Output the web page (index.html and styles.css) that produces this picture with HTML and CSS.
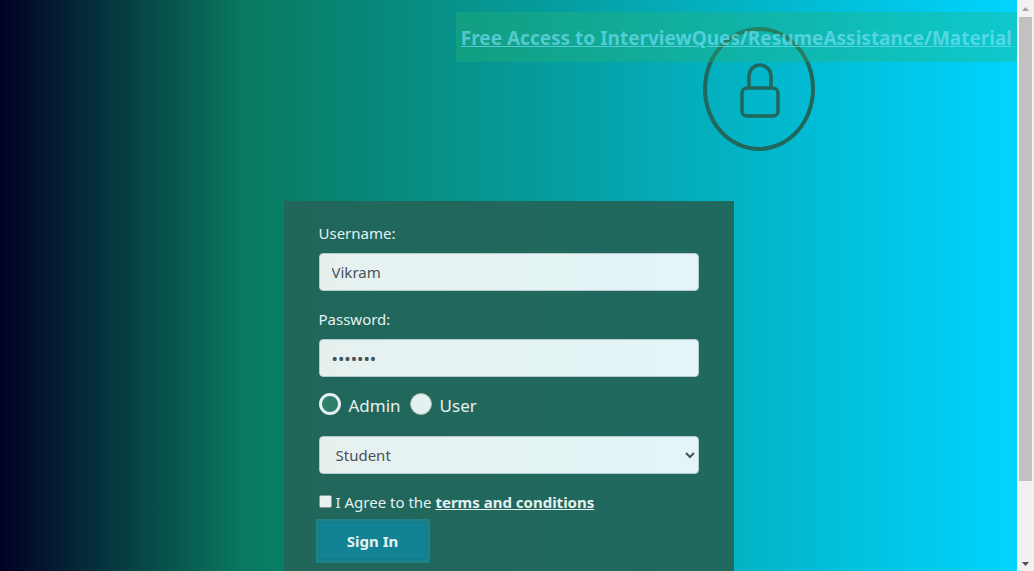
FILE: index.html
```html
<!DOCTYPE html>
<html lang="en">
<head>
<meta charset="utf-8">
<title>Sign In</title>
<link rel="stylesheet" href="styles.css">
</head>
<body>
<main class="page">
  <a class="banner" href="#">Free Access to InterviewQues/ResumeAssistance/Material</a>
  <header class="hero">
    <div class="badge">
      <svg class="lock" viewBox="0 0 40 56" aria-hidden="true">
        <rect x="3" y="27" width="36" height="28" rx="5"/>
        <path d="M10 27V15a11 11 0 0 1 22 0V27"/>
      </svg>
    </div>
  </header>
  <form class="card">
    <label class="label" for="username">Username:</label>
    <input class="control" id="username" type="text" value="Vikram">
    <label class="label" for="password">Password:</label>
    <input class="control password" id="password" type="password" value="vikram1">
    <div class="roles">
      <input class="radio" id="admin" type="radio" name="role" checked>
      <label for="admin">Admin</label>
      <input class="radio" id="user" type="radio" name="role">
      <label for="user">User</label>
    </div>
    <select class="control select" aria-label="Account type">
      <option>Student</option>
    </select>
    <div class="terms">
      <input class="check" id="agree" type="checkbox">
      <label for="agree">I Agree to the <a href="#">terms and conditions</a></label>
    </div>
    <button class="submit" type="button">Sign In</button>
  </form>
</main>
<div class="scrollbar" aria-hidden="true">
  <svg class="arrow arrow-up" viewBox="0 0 7 4"><path d="M0 4L3.500 0L7 4Z"/></svg>
  <div class="track"><div class="thumb"></div></div>
  <svg class="arrow" viewBox="0 0 7 4"><path d="M0 0L3.500 4L7 0Z"/></svg>
</div>
</body>
</html>
```
FILE: styles.css
```css
* { box-sizing: border-box; }
body {
  margin: 0;
  height: 100vh;
  overflow: hidden;
  display: grid;
  grid-template-columns: 1fr 17px;
  grid-template-rows: 100%;
  font: 15px/24px "Noto Sans", sans-serif;
  color: #e4f1f0;
}
.page {
  position: relative;
  overflow: hidden;
  background: linear-gradient(90deg, #020024 0%, #09795f 24%, #00d4ff 100%);
}
.banner {
  position: absolute;
  top: 12px;
  right: 0;
  padding: 11px 5px 9px;
  font-size: 19px;
  line-height: 30px;
  font-weight: 700;
  white-space: nowrap;
  color: rgba(130, 228, 255, .6);
  background: rgba(40, 180, 112, .35);
}
.hero {
  display: flex;
  justify-content: flex-end;
  padding: 27px 202px 50px 0;
}
.badge {
  display: flex;
  align-items: center;
  justify-content: center;
  width: 112px;
  height: 124px;
  border: 4px solid #21675c;
  border-radius: 50%;
}
.lock {
  width: 40px;
  height: 56px;
  overflow: visible;
  fill: none;
  stroke: #21675c;
  stroke-width: 3.500;
}
.card {
  width: 450px;
  max-width: 100%;
  margin: 0 auto;
  padding: 20px 35px 40px;
  background: linear-gradient(90deg, #22665a, #20695f);
}
.label {
  display: block;
  margin-bottom: 8px;
}
.control {
  display: block;
  width: 100%;
  height: 38px;
  margin-bottom: 16px;
  padding: 6px 12px;
  font: inherit;
  color: #495057;
  background: linear-gradient(90deg, #e6f1ef, #e3f5f8);
  border: 1px solid #b4cccd;
  border-radius: 4px;
}
.password { font-size: 17px; }
.roles {
  display: flex;
  align-items: center;
  height: 26px;
  margin-bottom: 17px;
  font-size: 17px;
}
.radio {
  appearance: none;
  width: 22px;
  height: 22px;
  margin: -4px 8px 0 0;
  border: 1px solid #a5bcb8;
  border-radius: 50%;
  background: #e4f1f0;
}
.radio:checked {
  border: 3px solid #e4f1f0;
  background: #2f806a;
}
.roles label { margin-right: 9px; }
.select {
  appearance: auto;
  padding: 0 0 0 12px;
}
.terms {
  display: flex;
  align-items: center;
}
.check {
  appearance: none;
  width: 13px;
  height: 13px;
  margin: -2px 4px 0 0;
  border: 1px solid #8a9b98;
  border-radius: 2px;
  background: #e8f2f1;
}
.terms a {
  color: inherit;
  font-weight: 700;
}
.submit {
  display: block;
  width: 108px;
  height: 38px;
  margin-top: 8px;
  padding: 0;
  font: inherit;
  font-weight: 700;
  color: #e4f1f0;
  background: #118394;
  border: 1px solid #147a8a;
  box-shadow: 0 0 0 3px #1b828a;
}
.scrollbar {
  display: flex;
  flex-direction: column;
  align-items: center;
  padding: 7px 2px 5px;
  background: #f1f1f1;
}
.arrow {
  width: 7px;
  height: 4px;
  fill: #505050;
}
.arrow-up { fill: #a3a3a3; }
.track {
  flex: 1;
  width: 13px;
  padding: 6px 0;
}
.thumb {
  height: 86%;
  background: #c1c1c1;
}
```
